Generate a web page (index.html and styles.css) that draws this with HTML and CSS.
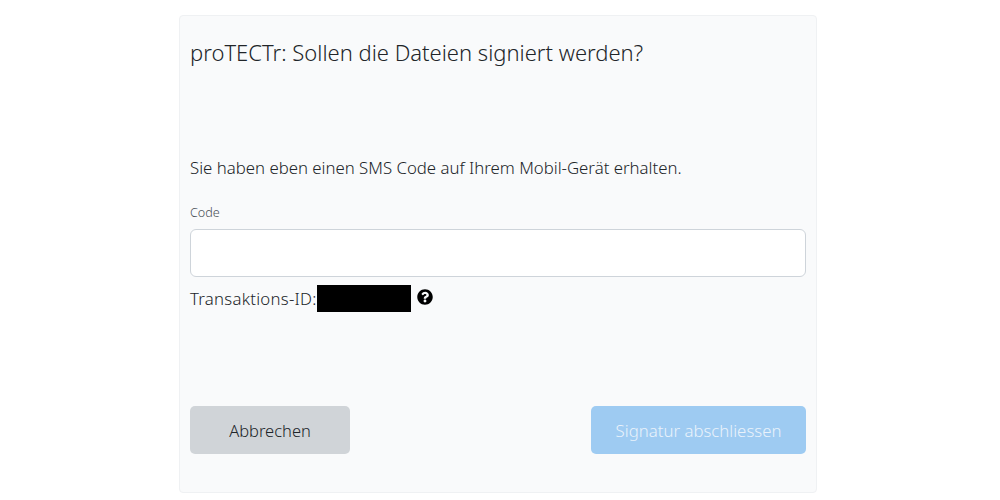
FILE: index.html
```html
<!DOCTYPE html>
<html lang="de">
<head>
<meta charset="utf-8">
<title>proTECTr</title>
<link rel="stylesheet" href="styles.css">
</head>
<body>
<main class="card">
  <h1 class="title">proTECTr: Sollen die Dateien signiert werden?</h1>
  <p class="info">Sie haben eben einen SMS Code auf Ihrem Mobil-Gerät erhalten.</p>
  <label class="label" for="code">Code</label>
  <input class="input" id="code" type="text">
  <div class="tx">
    <span class="tx-label">Transaktions-ID:</span>
    <span class="redacted"></span>
    <svg class="help" viewBox="0 0 512 512" aria-hidden="true"><path d="M504 256c0 137-111 248-248 248S8 393 8 256C8 119 119 8 256 8s248 111 248 248zM262.700 90c-54.500 0-89.300 23-116.500 63.800-3.500 5.300-2.400 12.400 2.700 16.300l34.700 26.300c5.200 3.900 12.600 3 16.700-2.100 17.900-22.700 30.100-35.800 57.300-35.800 20.400 0 45.700 13.100 45.700 33 0 15-12.400 22.700-32.600 34-23.600 13.200-54.800 29.700-54.800 70.900V302c0 6.600 5.400 12 12 12h56c6.600 0 12-5.400 12-12v-1.300c0-28.600 83.500-29.800 83.500-107.100C379.500 135.300 319 90 262.700 90zM256 338c-25.500 0-46.200 20.700-46.200 46.200s20.700 46.200 46.200 46.200 46.200-20.700 46.200-46.200S281.500 338 256 338z"/></svg>
  </div>
  <div class="actions">
    <button class="btn btn-cancel" type="button">Abbrechen</button>
    <button class="btn btn-submit" type="button">Signatur abschliessen</button>
  </div>
</main>
</body>
</html>
```
FILE: styles.css
```css
* { box-sizing: border-box; }
html, body { margin: 0; padding: 0; background: #fff; }
body { font-family: "Noto Sans", "Open Sans", sans-serif; font-weight: 300; color: #212529; height: 500px; overflow: hidden; }
.card {
  width: 638px;
  height: 478px;
  margin: 15px 0 0 179px;
  padding: 0 10px;
  background: #f9fafb;
  border: 1px solid #eff1f3;
  border-radius: 4px;
  display: flex;
  flex-direction: column;
}
.title { margin: 20px 0 0; font-size: 22px; font-weight: 300; line-height: 33px; color: #212529; }
.info { margin: 87px 0 0; font-size: 16.800px; line-height: 24px; }
.label { margin-top: 24px; font-size: 12.600px; line-height: 18px; color: #495057; }
.input { margin-top: 7px; height: 48px; width: 616px; border: 1px solid #ced4da; border-radius: 6px; background: #fff; }
.tx { margin-top: 8px; display: flex; align-items: flex-start; font-size: 16.800px; line-height: 28px; }
.tx-label { width: 126px; white-space: nowrap; letter-spacing: 0.250px; }
.redacted { width: 94px; height: 27px; background: #000; margin-left: 1px; }
.help { width: 16px; height: 16px; margin: 4px 0 0 6px; fill: #000; }
.actions { margin-top: 93px; display: flex; justify-content: space-between; width: 616px; }
.btn { height: 48px; border: 1px solid transparent; border-radius: 5px; font: inherit; font-size: 16.800px; padding: 0; }
.btn-cancel { width: 160px; background: #d0d4d8; color: #212529; font-size: 16.500px; }
.btn-submit { width: 215px; background: #9ecbf2; color: #e9f2fb; }
```
